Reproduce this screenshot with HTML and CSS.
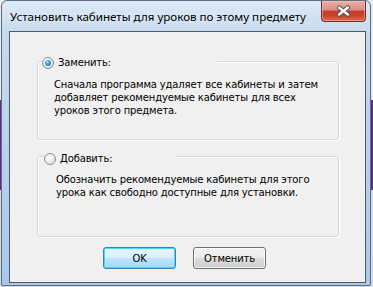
FILE: index.html
```html
<!DOCTYPE html>
<html lang="ru">
<head>
<meta charset="utf-8">
<title>Установить кабинеты</title>
<link rel="stylesheet" href="styles.css">
</head>
<body>
<div class="window">
  <div class="titlebar">
    <div class="title">Установить кабинеты для уроков по этому предмету</div>
    <div class="close">
      <svg width="45" height="20" viewBox="0 0 45 20">
        <path d="M18.5 7.5 L27.5 14.5 M27.5 7.5 L18.5 14.5" stroke="#5a4a48" stroke-width="4.6" stroke-linecap="round" fill="none"/>
        <path d="M18.5 7.5 L27.5 14.5 M27.5 7.5 L18.5 14.5" stroke="#ffffff" stroke-width="2.6" stroke-linecap="round" fill="none"/>
      </svg>
    </div>
  </div>
  <div class="client">
    <div class="group group-first">
      <label class="option option-first"><span class="radio radio-checked"></span><span>Заменить:</span></label>
      <p class="desc">Сначала программа удаляет все кабинеты и затем<br>добавляет рекомендуемые кабинеты для всех<br>уроков этого предмета.</p>
    </div>
    <div class="group group-second">
      <label class="option option-second"><span class="radio"></span><span>Добавить:</span></label>
      <p class="desc desc-second">Обозначить рекомендуемые кабинеты для этого<br>урока как свободно доступные для установки.</p>
    </div>
    <div class="buttons">
      <button class="btn btn-default">OK</button>
      <button class="btn">Отменить</button>
    </div>
  </div>
</div>
</body>
</html>
```
FILE: styles.css
```css
html, body {
  margin: 0;
  padding: 0;
}
body {
  width: 373px;
  height: 287px;
  overflow: hidden;
  background: linear-gradient(to bottom, #e9eaec 0, #e9eaec 100px, #5e2d84 100px, #5e2d84 190px, #d3d8de 190px);
  font-family: "DejaVu Sans", sans-serif;
  font-size: 10px;
  letter-spacing: -0.15px;
  color: #000;
}
.window {
  box-sizing: border-box;
  margin-left: 1px;
  width: 370px;
  height: 286px;
  border: 1px solid #5f6d7e;
  border-radius: 6px 6px 2px 2px;
  background: linear-gradient(to bottom, #dde9f6 0, #c7daef 30px, #b8d1ec 55%, #a9c8ea 100%);
  display: flex;
  flex-direction: column;
  padding: 0 4px 2px 7px;
}
.titlebar {
  height: 30px;
  display: flex;
  align-items: flex-start;
  flex: none;
}
.title {
  flex: 1;
  margin-top: 8px;
  margin-left: 1px;
  font-family: "Noto Sans", sans-serif;
  font-size: 11.6px;
  letter-spacing: 0;
  line-height: 15px;
  color: #000;
  white-space: nowrap;
  text-shadow: 0 0 6px rgba(255,255,255,0.9);
}
.close {
  box-sizing: border-box;
  width: 45px;
  height: 21px;
  border: 1px solid #6f2e25;
  border-top: none;
  border-radius: 0 0 4px 4px;
  background: linear-gradient(to bottom, #eab0a6 0%, #de8d80 45%, #c4412d 50%, #c4432e 72%, #e0694c 100%);
  box-shadow: inset 0 0 0 1px rgba(255,210,200,0.45);
  display: flex;
}
.close svg {
  display: block;
  margin: -1px 0 0 -1px;
}
.client {
  flex: 1;
  border: 1px solid #4f5967;
  background: #f0f0f0;
  display: flex;
  flex-direction: column;
}
.group {
  position: relative;
  margin: 0 26px 0 27px;
  border: 1px solid #d5d7d9;
  border-radius: 3px;
  box-shadow: inset 1px 1px 0 #ffffff, 1px 1px 0 #ffffff;
  box-sizing: border-box;
}
.group-first {
  margin-top: 29px;
  height: 79px;
}
.group-second {
  margin-top: 16px;
  height: 81px;
}
.option {
  position: absolute;
  top: -6px;
  left: 4px;
  height: 13px;
  display: flex;
  align-items: center;
  gap: 4px;
  background: #f0f0f0;
  line-height: 13px;
  white-space: nowrap;
}
.option-first {
  width: 175px;
}
.option-second {
  top: -5px;
  left: 6px;
  width: 131px;
}
.radio {
  position: relative;
  box-sizing: border-box;
  width: 12px;
  height: 12px;
  flex: none;
  border-radius: 50%;
  border: 1px solid #8b8e92;
  background: radial-gradient(circle at 40% 35%, #ffffff 0%, #eef0f2 45%, #cfd3d7 100%);
}
.radio-checked::after {
  content: "";
  position: absolute;
  left: 2px;
  top: 2px;
  width: 6px;
  height: 6px;
  border-radius: 50%;
  background: radial-gradient(circle at 40% 35%, #b8e6ff 0%, #3b9be0 40%, #0f5a9e 100%);
}
.desc {
  margin: 0;
  padding: 16px 0 0 16px;
  line-height: 13px;
  white-space: nowrap;
}
.desc-second {
  padding-left: 18px;
}
.buttons {
  margin-top: 10px;
  margin-left: 93px;
  display: flex;
  gap: 17px;
}
.btn {
  box-sizing: border-box;
  width: 73px;
  height: 22px;
  margin: 0;
  padding: 0;
  font-family: "DejaVu Sans", sans-serif;
  font-size: 10px;
  letter-spacing: -0.15px;
  color: #000;
  border: 1px solid #707070;
  border-radius: 3px;
  background: linear-gradient(to bottom, #f2f2f2 0%, #ebebeb 50%, #dddddd 50%, #cfcfcf 100%);
  box-shadow: inset 0 0 0 1px rgba(255,255,255,0.75);
}
.btn-default {
  border-color: #3c7fb1;
  background: linear-gradient(to bottom, #eaf6fd 0%, #d9f0fc 50%, #bee6fd 50%, #a7d9f5 100%);
  box-shadow: inset 0 0 0 1px #48d7fb;
}
```
